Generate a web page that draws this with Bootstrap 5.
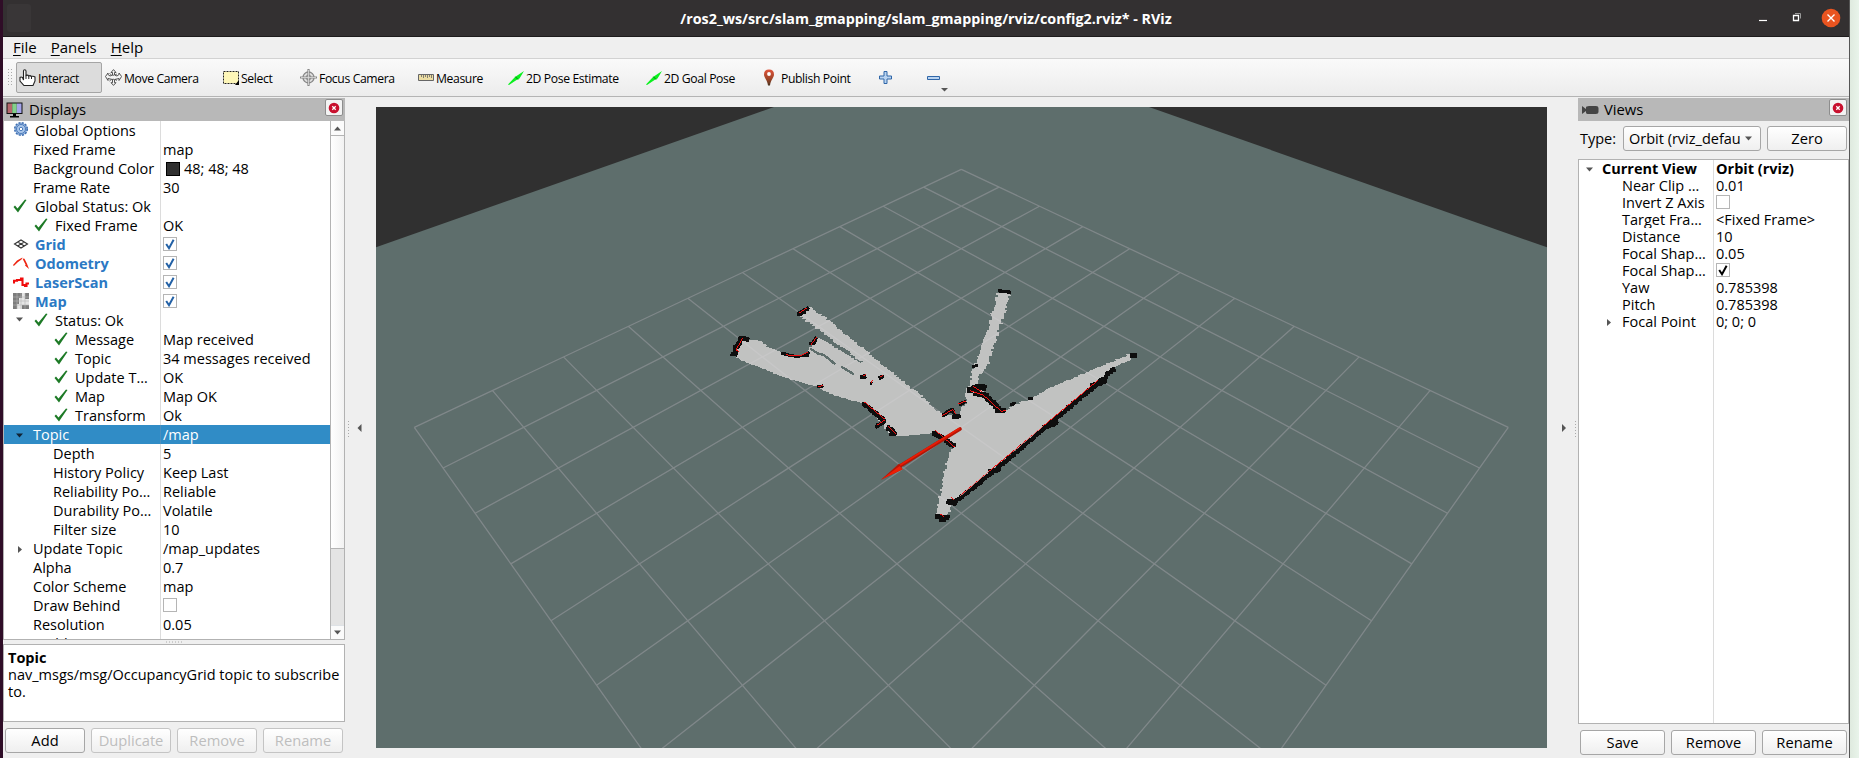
<!DOCTYPE html>
<html lang="en">
<head>
<meta charset="utf-8">
<title>RViz</title>
<link href="https://cdn.jsdelivr.net/npm/bootstrap@5.3.0/dist/css/bootstrap.min.css" rel="stylesheet">
<style>
body{width:1859px;height:758px;overflow:hidden;background:#efefef;font-family:"Open Sans","Noto Sans",sans-serif;font-size:14.5px;line-height:19px;color:#000}
svg{display:block;flex:none}
.desk-l{width:3px;background:#2f0d27}
.desk-r{width:10px;background:linear-gradient(90deg,#dfeadf,#e9f4ea);border-left:1px solid #555}
.win{width:1846px}
.titlebar{height:37px;background:#333031;border-bottom:1px solid #1d1b1c;color:#fff;font-weight:700;font-size:14.3px}
.ghost{width:24px;height:28px;background:#393637;border-radius:3px}
.titlebar .side{width:110px}
.menubar{height:22px;border-bottom:1px solid #d2d2d2;padding-left:10px;gap:14px;font-size:15px}
.menubar u{text-underline-offset:2px;text-decoration-thickness:1px}
.toolbar{height:38px;background:linear-gradient(#fafafa,#ececec);border-bottom:1px solid #b4b4b4;font-size:12.2px;letter-spacing:-.38px}
.toolbar svg+span{padding-top:1px}
.grip{width:6px;height:19px;background-image:radial-gradient(circle,#aaa 34%,transparent 40%);background-size:3px 3px}
.tool{height:31px;gap:2px;white-space:nowrap;flex:none;padding-left:2px;border:1px solid transparent;border-radius:2px}
.tool.on{background:#dcdcdc;border-color:#a5a5a5}
.dock{padding-top:1px}
.dock-title{height:23px;background:#b8b8b8;font-size:14.8px}
.xbtn{width:18px;height:17px;background:#f3f3f3;border:1px solid #8d8d8d;border-radius:2px;margin:0 2px 4px auto}
.left{width:342px}.right{width:271px}
.tree{background:#fff;border:1px solid #b2b2b2;overflow:hidden}
.left .tree{height:519px;border-top:0}
.right .tree{height:565px;line-height:17px}
.trow{height:19px;flex:none;white-space:nowrap}
.right .trow{height:17px}
.key{width:157px;flex:none;border-right:1px solid #dcdcdc;height:100%;overflow:hidden}
.right .key{width:135px}
.val{padding-left:2px}
.key svg{margin-right:6px;margin-top:1px}
.key svg[height="14"]{margin-top:2px}
.i0{padding-left:9px}.i0 svg{width:16px}
.i0 svg[height="14"]{width:16px}
.p0{padding-left:29px}
.i1{padding-left:30px}.i2{padding-left:50px}.p1{padding-left:49px}
.i1 svg,.i2 svg,.ar svg+svg{margin-right:7px}
.ar{padding-left:11px}.ar .tri{margin-right:9px}.ar .tri+svg{margin-left:1px}
.key .tri{width:9px}
.plug{color:#2b79c4;font-weight:700}
.sel{background:#308cc6;color:#fff}.sel .key{border-color:#4d8fbd}
.cb{width:14px;height:14px;border:1px solid #b5b5b5;background:#fff;margin-bottom:1px}
.sw{width:14px;height:14px;background:#303030;border:1px solid #000;margin:0 4px 0 3px}
.fill{flex:1}
.sbar{width:14px;border-left:1px solid #b4b4b4;background:#e4e4e4;flex:none}
.sbar .end{height:14px;background:#fbfbfb}
.sbar .thumb{height:414px;background:linear-gradient(90deg,#fff,#f2f2f2);border:solid #b4b4b4;border-width:1px 0}
.desc{height:78px;background:#fff;border:1px solid #b2b2b2;line-height:17px;padding:4px 4px;white-space:nowrap}
.qbtn{--bs-btn-padding-x:0;--bs-btn-padding-y:0;--bs-btn-font-size:14.7px;--bs-btn-line-height:21px;--bs-btn-border-radius:3px;--bs-btn-color:#000;--bs-btn-border-color:#a6a6a6;--bs-btn-disabled-color:#bebebe;--bs-btn-disabled-border-color:#c4c4c4;--bs-btn-disabled-opacity:1;background:linear-gradient(#fff,#efefef)!important;height:25px;flex:1}
.combo{height:25px;width:138px;border:1px solid #a6a6a6;border-radius:3px;background:linear-gradient(#fff,#efefef);padding:0 7px 0 5px}
.combo span{overflow:hidden;width:111px;white-space:nowrap}
.right .dk{gap:6px;padding:0 2px}
.view{padding:10px 0 10.5px}
.coll{width:31px}
.sub{padding-left:43px}
</style>
</head>
<body>
<svg width="0" height="0" class="position-absolute">
<defs>
<symbol id="ck" viewBox="0 0 14 14"><path d="M.5 8 2 6.500 4.500 9.500 12 .5 13.500 1 5 13.500z" fill="#1d7a26"/></symbol>
<symbol id="dn" viewBox="0 0 9 9"><path d="M1 2.500h7L4.500 6.500z" fill="#555"/></symbol>
<symbol id="rt" viewBox="0 0 9 9"><path d="M3 1v7l4-3.500z" fill="#555"/></symbol>
<symbol id="cx" viewBox="0 0 12 12"><circle cx="6" cy="6" r="5.300" fill="#c8102e"/><path d="M4.300 4.300l3.400 3.400M7.700 4.300 4.300 7.700" stroke="#fff" stroke-width="1.300"/></symbol>
<symbol id="tick" viewBox="0 0 12 12"><path d="M2.200 6 5 10.200 9.600 1.800" fill="none" stroke="currentColor" stroke-width="2"/></symbol>
<symbol id="pose" viewBox="0 0 16 14"><path d="M0 13.500 7.500 5.500 8.500 5 16 0 11.500 7.500 8.500 9 1 14z" fill="#0af01e"/><path d="M7.500 5.800l2.500 2.700" stroke="#087a14"/></symbol>
</defs>
</svg>
<div class="d-flex h-100">
<div class="desk-l flex-shrink-0"></div>
<div class="win d-flex flex-column flex-shrink-0">

<header class="titlebar d-flex justify-content-between align-items-center">
  <div class="side ps-1"><div class="ghost"></div></div>
  <div class="text-nowrap">/ros2_ws/src/slam_gmapping/slam_gmapping/rviz/config2.rviz* - RViz</div>
  <div class="side d-flex justify-content-end pe-2">
    <svg width="84" height="22"><path d="M2 13.500h8" stroke="#fff" stroke-width="1.200"/><path d="M36.500 8.500h5v5h-5z" fill="none" stroke="#fff" stroke-width="1.300"/><path d="M38 6.500h5.500v5" fill="none" stroke="#999"/><circle cx="74" cy="11" r="9.300" fill="#e95420"/><path d="M70.500 7.500l7 7m0-7-7 7" stroke="#fff" stroke-width="1.400"/></svg>
  </div>
</header>

<nav class="menubar d-flex align-items-center"><span><u>F</u>ile</span><span><u>P</u>anels</span><span><u>H</u>elp</span></nav>

<div class="toolbar d-flex align-items-center">
  <div class="grip ms-1"></div>
  <div class="tool on d-flex align-items-center" style="width:86px;margin-left:3px"><svg width="17" height="17" viewBox="0 0 17 17"><path d="M4.500 8.500V2q0-1.300 1.200-1.300T7 2v4.500q2-.8 2.600.4 2-.7 2.600.5 2.600-.5 3.800.6V12l-2 4.500H5L1 12V8.500q1-1 2.500 0L4.500 11z" fill="#fff" stroke="#222" stroke-width="1.100"/><path d="M7 6.500V10m2.800-3v3m2.700-2.500V10" stroke="#222"/></svg><span>Interact</span></div>
  <div class="tool d-flex align-items-center" style="width:118px"><svg width="17" height="17" viewBox="0 0 17 17" fill="#f4f4f4" stroke="#444" stroke-width=".9"><path d="M8.500.6 11 3.500H9.500v2.500l2.500 1 2-1.500V4l2.600 3.500L14 11.500V9.500L9.500 10.500v3.200H11L8.500 16.400 6 13.700h1.500v-3.200L3 9.500v2L.5 7.500 3 4v1.500L5 7l2.500-1V3.500H6z"/><path d="M4.500 4.500q4 3.500 8 0M4.500 12q4-3.500 8 0" fill="none" stroke-dasharray="2 1"/></svg><span>Move Camera</span></div>
  <div class="tool d-flex align-items-center" style="width:77px"><svg width="16" height="15"><path d="M.5 1.500h15v12H.5z" fill="#fdf6b8" stroke="#222" stroke-dasharray="2 1"/><path d="M16 10v5h-4z"/></svg><span>Select</span></div>
  <div class="tool d-flex align-items-center" style="width:118px"><svg width="17" height="17" viewBox="0 0 17 17" fill="none" stroke="#888"><circle cx="8.500" cy="8.500" r="5.500" fill="#ddd" stroke-width="1.300"/><circle cx="8.500" cy="8.500" r="2.500"/><path d="M8.500 0v17M0 8.500h17" stroke-width="2.200"/><path d="M8.500 1v15M1 8.500h15" stroke="#ddd" stroke-width=".8"/></svg><span>Focus Camera</span></div>
  <div class="tool d-flex align-items-center" style="width:90px"><svg width="16" height="7"><path d="M.5.5h15v6H.5z" fill="#ecdda2" stroke="#666"/><path d="M3.500 1v2m2-2v3m2-3v2m2-2v3m2-3v2m2-2v3" stroke="#666" stroke-width=".8"/></svg><span>Measure</span></div>
  <div class="tool d-flex align-items-center" style="width:138px"><svg width="16" height="14"><use href="#pose"/></svg><span>2D Pose Estimate</span></div>
  <div class="tool d-flex align-items-center" style="width:117px"><svg width="16" height="14"><use href="#pose"/></svg><span>2D Goal Pose</span></div>
  <div class="tool d-flex align-items-center" style="width:114px"><svg width="12" height="17" viewBox="0 0 12 17"><defs><linearGradient id="pg" x2="0" y2="1"><stop offset="0" stop-color="#e0533a"/><stop offset=".6" stop-color="#9d4427"/><stop offset="1" stop-color="#4b3420"/></linearGradient></defs><path d="M6 .5q5 0 5 5c0 3-3.500 6-4 11H5C4.500 11.500 1 8.500 1 5.500q0-5 5-5z" fill="url(#pg)"/><circle cx="6" cy="5" r="1.900" fill="#fff"/></svg><span class="ps-1">Publish Point</span></div>
  <svg width="13" height="13" style="margin-left:5px"><path d="M5 .5h3V5h4.500v3H8v4.500H5V8H.5V5H5z" fill="#b9d3f0" stroke="#2f66a8"/></svg>
  <svg width="24" height="30" style="margin-left:35px"><path d="M.5 13.500h12v3H.5z" fill="#b9d3f0" stroke="#2f66a8"/><path d="M14 25h7l-3.500 3.500z" fill="#555"/></svg>
</div>

<main class="d-flex flex-fill" style="min-height:0">
 <section class="dock left d-flex flex-column flex-shrink-0">
  <div class="dock-title d-flex align-items-center" style="padding-left:3px"><svg width="17" height="16"><path d="M.5.500h16v11.500H.5z" fill="#111"/><path d="M1.500 1.500h4.700V11H1.500z" fill="#b5676d"/><path d="M6.200 1.500h4.600V11H6.200z" fill="#83d08a"/><path d="M10.800 1.500h4.700V11h-4.700z" fill="#a5a5ea"/><path d="M7 12h3v2h3v1.500H4V14h3z"/></svg><span style="padding-left:6px">Displays</span><div class="xbtn d-flex align-items-center justify-content-center"><svg width="12" height="12"><use href="#cx"/></svg></div></div>
  <div class="tree d-flex">
   <div class="flex-fill d-flex flex-column">
    <div class="trow d-flex"><div class="key i0 d-flex"><svg height="16" viewBox="0 0 16 16"><circle cx="8" cy="7" r="6.300" fill="#8fb0dd" stroke="#3f6fb0" stroke-width="1.500" stroke-dasharray="2 1.300"/><circle cx="8" cy="7" r="4.500" fill="#a9c6ea" stroke="#4d7cbb"/><circle cx="8" cy="7" r="1.700" fill="#fff" stroke="#4d7cbb"/></svg><span>Global Options</span></div></div>
    <div class="trow d-flex"><div class="key p0">Fixed Frame</div><div class="val">map</div></div>
    <div class="trow d-flex"><div class="key p0">Background Color</div><div class="val d-flex align-items-center"><i class="sw"></i>48; 48; 48</div></div>
    <div class="trow d-flex"><div class="key p0">Frame Rate</div><div class="val">30</div></div>
    <div class="trow d-flex"><div class="key i0 d-flex"><svg height="14" viewBox="0 0 16 14"><use href="#ck" width="14" height="14"/></svg><span>Global Status: Ok</span></div></div>
    <div class="trow d-flex"><div class="key i1 d-flex"><svg width="14" height="14"><use href="#ck"/></svg><span>Fixed Frame</span></div><div class="val">OK</div></div>
    <div class="trow d-flex"><div class="key i0 d-flex plug"><svg height="16" viewBox="0 0 16 16" fill="none" stroke="#333" stroke-width="1.100"><path d="M1.500 8 8 4 14.500 8 8 12zM4.700 6l6.600 4m0-4L4.700 10"/></svg><span>Grid</span></div><div class="val d-flex align-items-center"><i class="cb"><svg width="12" height="12" color="#2361a6"><use href="#tick"/></svg></i></div></div>
    <div class="trow d-flex"><div class="key i0 d-flex plug"><svg height="16" viewBox="0 0 16 16"><path d="M0 10 4 5.500 9.500 2.500 8.500 4.500 5 7 .8 11zM9.500 3.500l2 .3 2.500 5 2 5.200-4-3.500.6-.8z" fill="#ee2410"/></svg><span>Odometry</span></div><div class="val d-flex align-items-center"><i class="cb"><svg width="12" height="12" color="#2361a6"><use href="#tick"/></svg></i></div></div>
    <div class="trow d-flex"><div class="key i0 d-flex plug"><svg height="16" viewBox="0 0 16 16"><path d="M1 9.500V6.800h3V6h4V4.500h1.500V11H12v1h1.500V9.500H16" fill="none" stroke="#f00c0c" stroke-width="2.100"/></svg><span>LaserScan</span></div><div class="val d-flex align-items-center"><i class="cb"><svg width="12" height="12" color="#2361a6"><use href="#tick"/></svg></i></div></div>
    <div class="trow d-flex"><div class="key i0 d-flex plug"><svg height="16" viewBox="0 0 16 16"><path d="M0 0h16v16H0z" fill="#e6e6e6"/><path d="M0 0h9v5H6v6H4v5H0zM12 0h4v6h-4zM9 12h7v4H9z" fill="#7d7d7d"/><path d="M0 4h16M0 8h16M0 12h16M4 0v16M8 0v16M12 0v16" stroke="#b5b5b5" stroke-width=".6"/></svg><span>Map</span></div><div class="val d-flex align-items-center"><i class="cb"><svg width="12" height="12" color="#2361a6"><use href="#tick"/></svg></i></div></div>
    <div class="trow d-flex"><div class="key ar d-flex"><svg class="tri mt-1" height="9"><use href="#dn"/></svg><svg width="14" height="14"><use href="#ck"/></svg><span>Status: Ok</span></div></div>
    <div class="trow d-flex"><div class="key i2 d-flex"><svg width="14" height="14"><use href="#ck"/></svg><span>Message</span></div><div class="val">Map received</div></div>
    <div class="trow d-flex"><div class="key i2 d-flex"><svg width="14" height="14"><use href="#ck"/></svg><span>Topic</span></div><div class="val">34 messages received</div></div>
    <div class="trow d-flex"><div class="key i2 d-flex"><svg width="14" height="14"><use href="#ck"/></svg><span>Update T…</span></div><div class="val">OK</div></div>
    <div class="trow d-flex"><div class="key i2 d-flex"><svg width="14" height="14"><use href="#ck"/></svg><span>Map</span></div><div class="val">Map OK</div></div>
    <div class="trow d-flex"><div class="key i2 d-flex"><svg width="14" height="14"><use href="#ck"/></svg><span>Transform</span></div><div class="val">Ok</div></div>
    <div class="trow d-flex sel"><div class="key ar d-flex align-items-center"><svg class="tri" height="9"><path d="M1 2.500h7L4.500 6.500z" fill="#123"/></svg>Topic</div><div class="val">/map</div></div>
    <div class="trow d-flex"><div class="key p1">Depth</div><div class="val">5</div></div>
    <div class="trow d-flex"><div class="key p1">History Policy</div><div class="val">Keep Last</div></div>
    <div class="trow d-flex"><div class="key p1">Reliability Po…</div><div class="val">Reliable</div></div>
    <div class="trow d-flex"><div class="key p1">Durability Po…</div><div class="val">Volatile</div></div>
    <div class="trow d-flex"><div class="key p1">Filter size</div><div class="val">10</div></div>
    <div class="trow d-flex"><div class="key ar d-flex align-items-center"><svg class="tri" height="9"><use href="#rt"/></svg>Update Topic</div><div class="val">/map_updates</div></div>
    <div class="trow d-flex"><div class="key p0">Alpha</div><div class="val">0.7</div></div>
    <div class="trow d-flex"><div class="key p0">Color Scheme</div><div class="val">map</div></div>
    <div class="trow d-flex"><div class="key p0">Draw Behind</div><div class="val d-flex align-items-center"><i class="cb"></i></div></div>
    <div class="trow d-flex"><div class="key p0">Resolution</div><div class="val">0.05</div></div>
    <div class="trow d-flex"><div class="key p0">Width</div></div>
   </div>
   <div class="sbar d-flex flex-column justify-content-between"><div><div class="end d-flex justify-content-center align-items-center"><svg width="9" height="9"><path d="M1 6.500h7L4.500 2.500z" fill="#555"/></svg></div><div class="thumb"></div></div><div class="end border-top d-flex justify-content-center align-items-center"><svg width="9" height="9"><use href="#dn"/></svg></div></div>
  </div>
  <svg width="342" height="4"><path d="M163 2h17" stroke="#aaa" stroke-dasharray="1 2"/></svg>
  <div class="desc"><b>Topic</b><br>nav_msgs/msg/OccupancyGrid topic to subscribe<br>to.</div>
  <div class="d-flex" style="gap:6px;padding:6px 2px 0"><button class="btn qbtn">Add</button><button class="btn qbtn" disabled>Duplicate</button><button class="btn qbtn" disabled>Remove</button><button class="btn qbtn" disabled>Rename</button></div>
 </section>

 <div class="coll d-flex align-items-center justify-content-center flex-shrink-0"><svg width="28" height="20"><path d="M1.500 3v16" stroke="#aaa" stroke-dasharray="1 2"/><path d="M14.500 6v8l-4-4z" fill="#555"/></svg></div>
 <div class="view flex-shrink-0">
  <svg width="1171" height="640.5" viewBox="376 107 1171 640.5">
   <path d="M376 107h1171v641H376z" fill="#5e6e6c"/>
   <path d="M376 107h398L376 247.300zM1149 107h398v140.300z" fill="#303030"/>
   <path id="gridlines" fill="none" stroke="#a0a0a4" stroke-opacity=".52" stroke-width="1.300"/>
   <g transform="translate(700 270) scale(.33333)">
    <g id="free" fill="#d9d7d7" fill-opacity=".8" shape-rendering="crispEdges"></g>
    <g fill="none" stroke="#5e6e6c" stroke-width="7" shape-rendering="crispEdges"><path d="M330 235 352 250 372 255 406 283M424 290 462 313"/></g>
    <g id="walls" fill="none" stroke="#0e0e0e" shape-rendering="crispEdges"></g>
    <g fill="none" stroke="#f21010" stroke-width="3" shape-rendering="crispEdges">
     <path d="M297 130 322 113M128 204 108 240 118 246M333 224 350 202M258 254 280 258 305 256 325 246M493 396 556 449 530 466M563 468 586 491M706 481 766 533M727 437 758 418 768 432M775 402 797 393M780 677 1195 330M753 680 761 690M720 732 732 740M810 362 850 375 880 403 905 425 918 420M820 350 845 365M540 320 550 316M512 340 518 330M355 350 370 346M488 318 497 314"/>
     <path d="M781 678 868 603M940 545 1030 468" stroke="#e8a0a0" stroke-width="2"/>
    </g>
    <path d="M780 477 600 588" stroke="#b51505" stroke-width="11" stroke-linecap="round"/><path d="M779 475 600 586" stroke="#ea1c05" stroke-width="5"/>
    <path d="M543 629 597 581 608 598z" fill="#b51505"/><path d="M543 629 599 588 608 598z" fill="#ee1e06"/>
   </g>
  </svg>
 </div>
 <div class="coll d-flex align-items-center justify-content-center flex-shrink-0"><svg width="28" height="20"><path d="M13 6v8l4-4z" fill="#555"/><path d="M26.500 3v16" stroke="#aaa" stroke-dasharray="1 2"/></svg></div>

 <section class="dock right d-flex flex-column flex-shrink-0">
  <div class="dock-title d-flex align-items-center ps-1"><svg width="17" height="10"><path d="M0 1 4 4V2.500Q4 1 7 1h7q2.500 0 2.500 2v4q0 2-2.500 2H7Q4 9 4 7.500V6L0 9z" fill="#444"/></svg><span style="padding-left:5px">Views</span><div class="xbtn d-flex align-items-center justify-content-center"><svg width="12" height="12"><use href="#cx"/></svg></div></div>
  <div class="d-flex align-items-center" style="padding:5px 2px 8px"><span style="width:43px">Type:</span><div class="combo d-flex align-items-center justify-content-between"><span>Orbit (rviz_default)</span><svg width="9" height="9"><use href="#dn"/></svg></div><button class="btn qbtn" style="margin-left:6px">Zero</button></div>
  <div class="tree d-flex flex-column">
    <div class="trow d-flex fw-bold"><div class="key d-flex align-items-center" style="padding-left:6px"><svg class="tri" height="9" style="margin-right:8px"><use href="#dn"/></svg>Current View</div><div class="val">Orbit (rviz)</div></div>
    <div class="trow d-flex"><div class="key sub">Near Clip …</div><div class="val">0.01</div></div>
    <div class="trow d-flex"><div class="key sub">Invert Z Axis</div><div class="val d-flex align-items-center"><i class="cb"></i></div></div>
    <div class="trow d-flex"><div class="key sub">Target Fra…</div><div class="val">&lt;Fixed Frame&gt;</div></div>
    <div class="trow d-flex"><div class="key sub">Distance</div><div class="val">10</div></div>
    <div class="trow d-flex"><div class="key sub">Focal Shap…</div><div class="val">0.05</div></div>
    <div class="trow d-flex"><div class="key sub">Focal Shap…</div><div class="val d-flex align-items-center"><i class="cb"><svg width="12" height="12" color="#000"><use href="#tick"/></svg></i></div></div>
    <div class="trow d-flex"><div class="key sub">Yaw</div><div class="val">0.785398</div></div>
    <div class="trow d-flex"><div class="key sub">Pitch</div><div class="val">0.785398</div></div>
    <div class="trow d-flex"><div class="key d-flex align-items-center" style="padding-left:25px"><svg class="tri" height="9" style="margin-right:9px"><use href="#rt"/></svg>Focal Point</div><div class="val">0; 0; 0</div></div>
    <div class="key fill"></div>
  </div>
  <div class="d-flex dk" style="padding-top:6px"><button class="btn qbtn">Save</button><button class="btn qbtn">Remove</button><button class="btn qbtn">Rename</button></div>
 </section>
</main>
</div>
<div class="desk-r flex-shrink-0"></div>
</div>
<script src="https://cdn.jsdelivr.net/npm/bootstrap@5.3.0/dist/js/bootstrap.bundle.min.js"></script>
<script>
// 10x10 ground grid seen from the orbit camera (distance 10, yaw and pitch 45 degrees)
function project(i, j) {
  const u = (i - j) / 2, v = (i + j) / 2;
  return (961.3 + 1094 * u / (10 + v)).toFixed(1) + ' ' + (427.3 - 774 * v / (10 + v)).toFixed(1);
}
let d = '';
for (let k = -5; k <= 5; k++) d += `M${project(k, -5)}L${project(k, 5)}M${project(-5, k)}L${project(5, k)}`;
document.getElementById('gridlines').setAttribute('d', d);

// occupancy cells: outlines are roughened to the cell raster
let seed = 7;
const rnd = () => (seed = (seed * 16807) % 2147483647) / 2147483647;
const NS = 'http://www.w3.org/2000/svg';
function rough(pts, amp, close) {
  let s = '', n = close ? pts.length : pts.length - 1;
  for (let a = 0; a < n; a++) {
    const [x0, y0] = pts[a], [x1, y1] = pts[(a + 1) % pts.length];
    const steps = Math.max(1, Math.round(Math.hypot(x1 - x0, y1 - y0) / 6));
    for (let t = 0; t < steps; t++) {
      const x = x0 + (x1 - x0) * t / steps + (rnd() - .5) * amp * 2, y = y0 + (y1 - y0) * t / steps;
      s += (s ? 'H' + x.toFixed(0) + 'V' : 'M' + x.toFixed(0) + ' ') + y.toFixed(0);
    }
  }
  return s + (close ? 'z' : '');
}
function add(id, path, w) {
  const p = document.createElementNS(NS, 'path');
  p.setAttribute('d', path);
  if (w) p.setAttribute('stroke-width', w);
  document.getElementById(id).appendChild(p);
}
add('free', rough([[106,254],[122,212],[150,208],[175,210],[197,228],[240,248],[285,260],[318,250],[332,225],[352,200],[400,230],[455,265],[508,292],[445,244],[360,180],[300,137],[328,112],[368,138],[450,206],[532,273],[626,348],[728,436],[775,432],[798,392],[797,362],[806,348],[830,262],[860,180],[880,110],[892,68],[932,68],[914,130],[899,180],[882,230],[862,288],[840,318],[833,350],[862,378],[905,425],[940,405],[1000,381],[1060,347],[1120,322],[1200,290],[1295,248],[1302,264],[1245,292],[1195,337],[1060,450],[900,582],[770,696],[752,706],[745,738],[706,730],[718,685],[726,640],[740,580],[757,530],[700,490],[640,496],[590,498],[554,474],[543,452],[488,400],[450,390],[400,374],[350,348],[275,329],[190,295],[116,268]], 5, true));
[[[[293,132],[326,113]],11],[[[114,203],[148,210]],12],[[[124,208],[110,232],[104,258]],12],[[[92,252],[112,254]],9],[[[330,226],[350,202]],10],
 [[[240,250],[285,259],[318,257],[328,246]],8],[[[352,351],[370,346]],9],[[[481,321],[499,318]],12],[[[535,325],[551,318]],9],[[[510,342],[518,336]],6],
 [[[488,402],[556,455],[526,472]],10],[[[562,472],[584,490]],12],[[[566,493],[592,490]],10],[[[698,488],[722,500],[764,532]],12],
 [[[724,438],[755,420],[768,436]],9],[[[756,440],[782,438]],12],[[[774,404],[799,394]],9],[[[894,63],[932,68]],9],[[[816,289],[834,286]],8],
 [[[804,362],[830,352],[858,354]],16],[[[828,350],[856,350]],14],[[[820,370],[855,376],[880,402],[902,422]],14],[[[884,424],[918,420]],12],
 [[[930,404],[948,399]],8],[[[984,386],[998,386]],7],[[[1290,257],[1312,257]],14],[[[1245,296],[1195,341],[1060,454],[900,590],[762,700]],10],
 [[[1170,348],[1200,340],[1218,324]],12],[[[1030,474],[1074,453]],13],[[[866,607],[900,596]],13],[[[742,694],[770,700]],16],[[[706,740],[746,743]],14],[[[718,751],[738,751]],11]
].forEach(w => add('walls', rough(w[0], 2.5, false) + 'L' + w[0][w[0].length - 1], w[1]));
</script>
</body>
</html>
